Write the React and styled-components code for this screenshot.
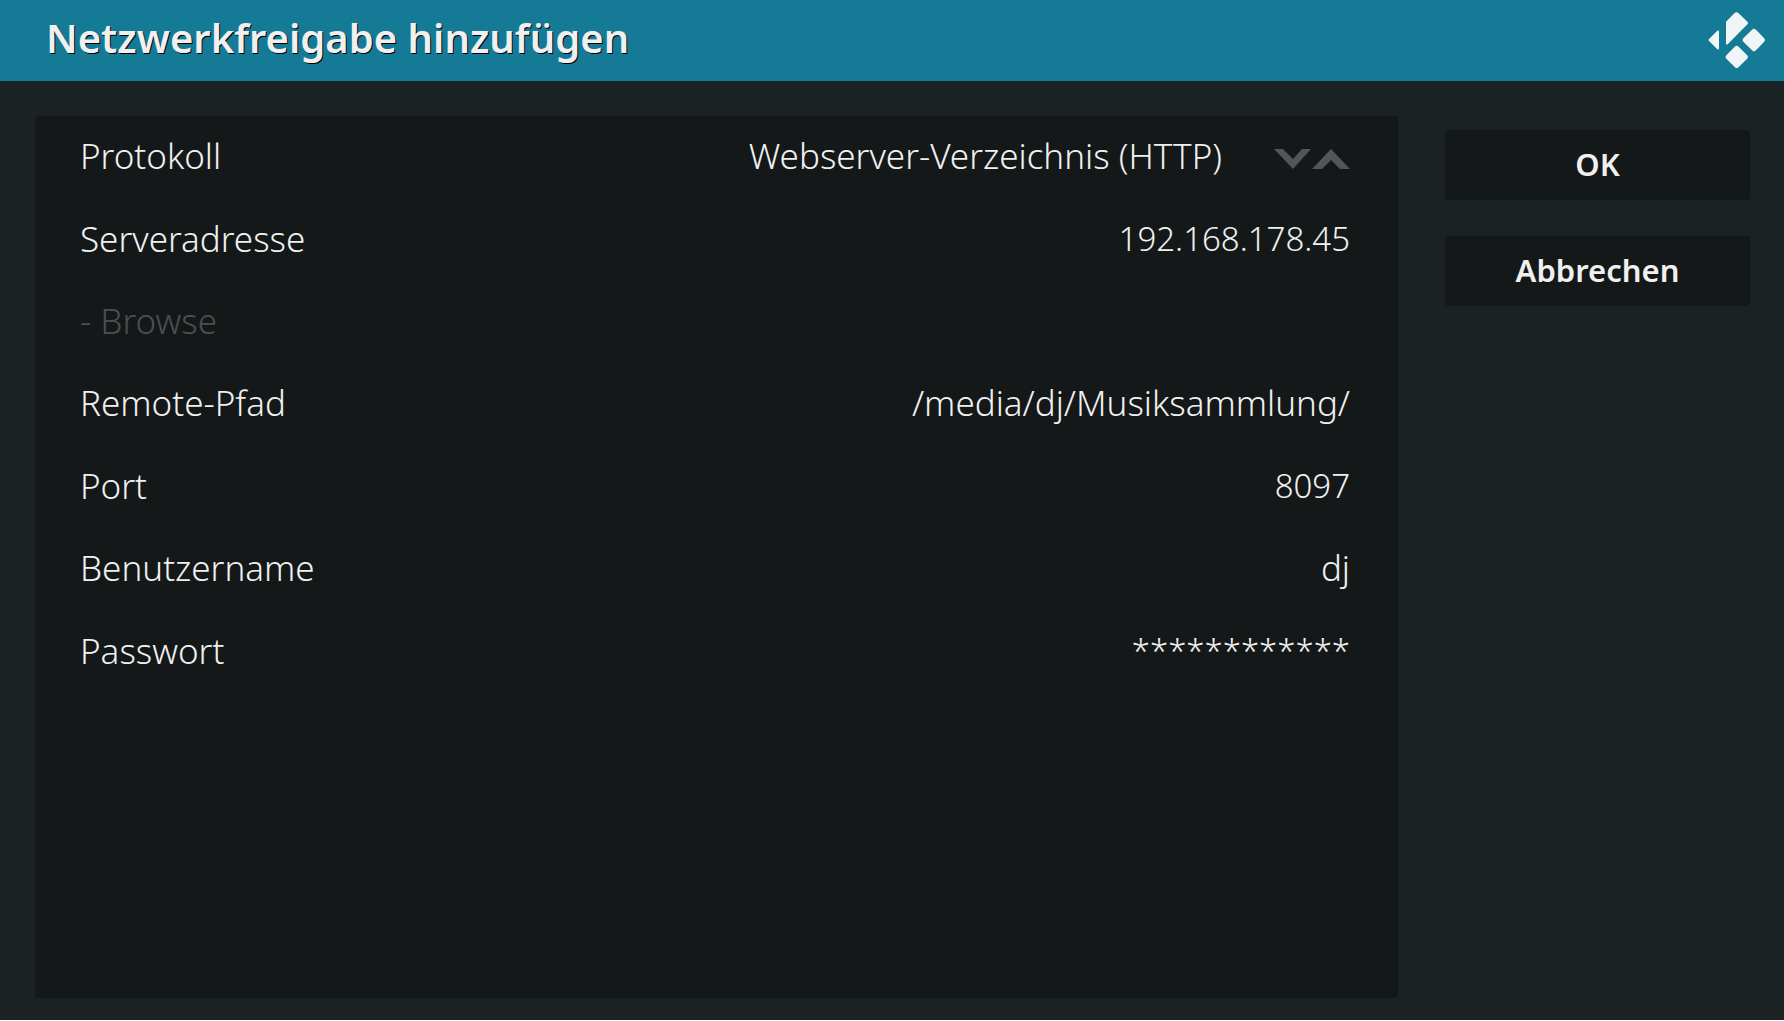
import React, { useState } from "react";
import styled, { createGlobalStyle } from "styled-components";

const GlobalStyle = createGlobalStyle`
	*{box-sizing:border-box;}
	body{margin:0;background:#fff;}
	body,button,input,select{font-family:"Noto Sans","Open Sans",sans-serif;}
`;

const Dialog = styled.form`
	display:flex;
	flex-direction:column;
	height:calc(100vh - 1px);
	background:#1b2223;
	color:#f0f0f0;
`;

const Header = styled.header`
	display:flex;
	align-items:center;
	justify-content:space-between;
	height:81px;
	padding:0 18px 2px 46px;
	background:#157a96;
	h1{
		margin:0;
		padding-bottom:4px;
		font-size:40px;
		line-height:52px;
		font-weight:600;
		text-shadow:1px 1px 0 #000;
	}
	svg{display:block;}
`;

const Body = styled.div`
	flex:1;
	display:flex;
	gap:47px;
	padding:35px 34px 22px 35px;
`;

const Panel = styled.section`
	flex:1;
	display:grid;
	grid-template-rows:repeat(10,1fr);
	padding:0 48px 58px 45px;
	border-radius:4px;
	background:#141819;
`;

const Row = styled.div`
	display:flex;
	align-items:center;
	justify-content:space-between;
	padding-bottom:2px;
	font-size:35px;
	line-height:46px;
	font-weight:300;
`;

const Field = styled.input`
	flex:1;
	min-width:0;
	padding:0;
	border:0;
	outline:0;
	background:none;
	color:inherit;
	font-size:${props => props.$code ? "33px" : "inherit"};
	line-height:inherit;
	font-weight:inherit;
	text-align:right;
`;

const Choice = styled.select`
	flex:1;
	min-width:0;
	margin-right:52px;
	padding:0;
	border:0;
	outline:0;
	appearance:none;
	background:none;
	color:inherit;
	font-size:inherit;
	line-height:inherit;
	font-weight:inherit;
	text-align-last:right;
	option{background:#141819;}
`;

const Browse = styled.button`
	padding:0;
	border:0;
	background:none;
	color:#4c4f50;
	font-size:inherit;
	line-height:inherit;
	font-weight:inherit;
`;

const Spin = styled.div`
	display:flex;
	padding-top:6px;
`;

const SpinButton = styled.button`
	display:block;
	padding:0;
	border:0;
	background:none;
	color:#535556;
	svg{display:block;}
`;

const Actions = styled.div`
	display:flex;
	flex-direction:column;
	gap:36px;
	width:305px;
	padding-top:14px;
`;

const Action = styled.button`
	height:70px;
	padding:0 0 2px;
	border:0;
	border-radius:4px;
	background:#141819;
	color:#f0f0f0;
	font-size:31px;
	line-height:40px;
	font-weight:600;
`;

const protocols = [
	"Webserver-Verzeichnis (HTTP)",
	"Webserver-Verzeichnis (HTTPS)",
	"FTP-Server (FTP)",
];

const fields = [
	{id:"path", label:"Remote-Pfad", value:"/media/dj/Musiksammlung/"},
	{id:"port", label:"Port", value:"8097", code:true},
	{id:"user", label:"Benutzername", value:"dj"},
	{id:"password", label:"Passwort", value:"************", code:true},
];

const Logo = () => (
	<svg width="58" height="58" viewBox="0 0 58 58" fill="#f0f6f8" stroke="#f0f6f8" strokeWidth="2" strokeLinejoin="round">
		<path d="M10 20.500V37.500L1.500 29Z" />
		<path d="M19 11.300L27.300 2.800Q28.500 1.600 29.700 2.800L38.500 11.200Q39.400 12 38.500 12.900L19 32.500Z" />
		<path d="M45 19.200Q46 18.200 47 19.200L55.500 28Q56.500 29 55.500 30L47 38.800Q46 39.800 45 38.800L36 30Q35 29 36 28Z" />
		<path d="M27.700 36.200Q28.700 35.200 29.700 36.200L38.500 45Q39.500 46 38.500 47L29.700 55.500Q28.700 56.500 27.700 55.500L19 47Q18 46 19 45Z" />
	</svg>
);

const Arrow = ({points}) => (
	<svg width="38" height="20" viewBox="0 0 38 20" fill="currentColor">
		<polygon points={points} />
	</svg>
);

const TextRow = ({id, label, value, code}) => (
	<Row>
		<label htmlFor={id}>{label}</label>
		<Field id={id} type="text" defaultValue={value} $code={code} />
	</Row>
);

const App = () => {
	const [index, setIndex] = useState(0);
	const step = (n) => setIndex((index + n + protocols.length) % protocols.length);

	return (
		<>
			<GlobalStyle />
			<Dialog onSubmit={(event) => event.preventDefault()}>
				<Header>
					<h1>Netzwerkfreigabe hinzufügen</h1>
					<Logo />
				</Header>
				<Body>
					<Panel>
						<Row>
							<label htmlFor="protocol">Protokoll</label>
							<Choice id="protocol" value={index} onChange={(event) => setIndex(Number(event.target.value))}>
								{protocols.map((name, i) => <option key={name} value={i}>{name}</option>)}
							</Choice>
							<Spin>
								<SpinButton type="button" aria-label="Weiter" onClick={() => step(1)}>
									<Arrow points="0,0 9,0 19,10 28,0 37,0 19,20" />
								</SpinButton>
								<SpinButton type="button" aria-label="Zurück" onClick={() => step(-1)}>
									<Arrow points="0,20 19,0 38,20 28,20 19,11 10,20" />
								</SpinButton>
							</Spin>
						</Row>
						<TextRow id="server" label="Serveradresse" value="192.168.178.45" code />
						<Row>
							<Browse type="button" disabled>- Browse</Browse>
						</Row>
						{fields.map((field) => <TextRow key={field.id} {...field} />)}
					</Panel>
					<Actions>
						<Action type="submit">OK</Action>
						<Action type="button">Abbrechen</Action>
					</Actions>
				</Body>
			</Dialog>
		</>
	);
};

export default App;
